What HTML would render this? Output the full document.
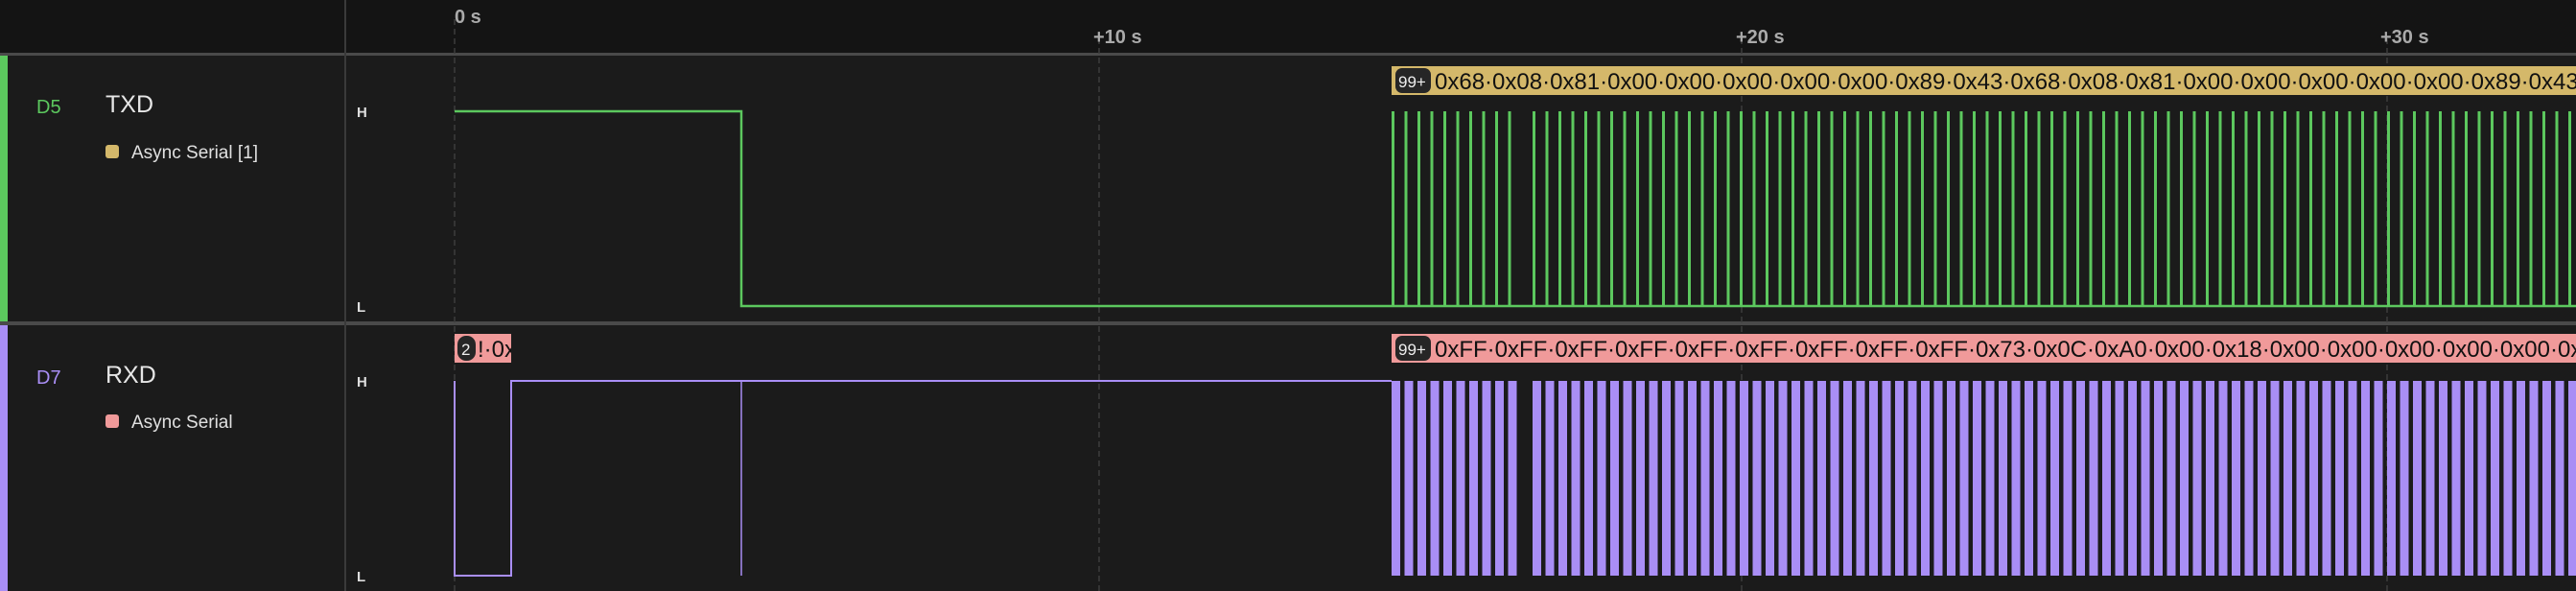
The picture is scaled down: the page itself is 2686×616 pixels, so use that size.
<!DOCTYPE html>
<html><head><meta charset="utf-8"><style>
html,body{margin:0;padding:0;background:#1b1b1b;width:2686px;height:616px;overflow:hidden;font-family:"Liberation Sans",sans-serif}
</style></head><body>
<svg id="s" width="2686" height="616" xmlns="http://www.w3.org/2000/svg" style="position:absolute;left:0;top:0">
<rect x="0" y="0" width="2686" height="616" fill="#1b1b1b"/>
<rect x="0" y="0" width="2686" height="57" fill="#141414"/>
<rect x="0" y="55" width="2686" height="3" fill="#4a4a4a"/>
<rect x="0" y="335" width="2686" height="4" fill="#4a4a4a"/>
<rect x="0" y="58" width="8" height="277" fill="#5cc85e"/>
<rect x="0" y="339" width="8" height="277" fill="#a98ef5"/>
<rect x="359" y="0" width="2" height="616" fill="#3a3a3a"/>
<g stroke="#3c3c3c" stroke-width="1.5" stroke-dasharray="6,4">
<line x1="474" y1="20" x2="474" y2="616"/><line x1="1146" y1="40" x2="1146" y2="616"/>
<line x1="1816" y1="40" x2="1816" y2="616"/><line x1="2489" y1="40" x2="2489" y2="616"/>
</g>
<g font-size="20" fill="#aaaaaa" font-weight="bold">
<text x="474" y="24">0 s</text><text x="1140" y="45">+10 s</text><text x="1810" y="45">+20 s</text><text x="2482" y="45">+30 s</text>
</g>
<g font-size="15" fill="#dddddd" font-weight="bold"><text x="372" y="122">H</text><text x="372" y="325">L</text><text x="372" y="403">H</text><text x="372" y="606">L</text></g>
<text x="38" y="118" font-size="20" fill="#5cc85e">D5</text>
<text x="110" y="117" font-size="25" fill="#e6e6e6">TXD</text>
<rect x="110" y="151" width="14" height="14" rx="3" fill="#d4b86a"/>
<text x="137" y="165" font-size="19" fill="#e0e0e0">Async Serial [1]</text>
<text x="38" y="400" font-size="20" fill="#a98ef5">D7</text>
<text x="110" y="399" font-size="25" fill="#e6e6e6">RXD</text>
<rect x="110" y="432" width="14" height="14" rx="3" fill="#f09a9a"/>
<text x="137" y="446" font-size="19" fill="#e0e0e0">Async Serial</text>
<polyline points="474,116 773,116 773,319 1451,319 2686,319" fill="none" stroke="#5cc85e" stroke-width="2.5"/>
<polyline points="474,397 474,600 533,600 533,397 1451,397" fill="none" stroke="#a98ef5" stroke-width="2"/>
<line x1="773" y1="397" x2="773" y2="600" stroke="#a98ef5" stroke-width="1.5"/>
<g id="gp"></g><g id="pp"></g>
<rect x="1451" y="69" width="1235" height="30" fill="#d4b86a"/>
<rect x="1455" y="71" width="37" height="26" rx="7" fill="#262626"/>
<text x="1458" y="91" font-size="17" fill="#eee">99+</text>
<text x="1496" y="93" font-size="24" fill="#111">0x68·0x08·0x81·0x00·0x00·0x00·0x00·0x00·0x89·0x43·0x68·0x08·0x81·0x00·0x00·0x00·0x00·0x00·0x89·0x43·0x68</text>
<rect x="474" y="348" width="59" height="30" fill="#f09a9a"/>
<rect x="477" y="350" width="19" height="26" rx="9" fill="#262626"/>
<text x="481" y="370" font-size="17" fill="#eee">2</text>
<svg x="474" y="348" width="59" height="30"><text x="24" y="24" font-size="24" fill="#111">!·0x</text></svg>
<rect x="1451" y="348" width="1235" height="30" fill="#f09a9a"/>
<rect x="1455" y="350" width="37" height="26" rx="7" fill="#262626"/>
<text x="1458" y="370" font-size="17" fill="#eee">99+</text>
<text x="1496" y="372" font-size="24" fill="#111">0xFF·0xFF·0xFF·0xFF·0xFF·0xFF·0xFF·0xFF·0xFF·0x73·0x0C·0xA0·0x00·0x18·0x00·0x00·0x00·0x00·0x00·0x00·0x00</text>
</svg>
<script>
var ns="http://www.w3.org/2000/svg",gp=document.getElementById("gp"),pp=document.getElementById("pp");
function add(x){var r=document.createElementNS(ns,"rect");r.setAttribute("x",x);r.setAttribute("y",116);r.setAttribute("width",3);r.setAttribute("height",203);r.setAttribute("fill","#5cc85e");gp.appendChild(r);
var q=document.createElementNS(ns,"rect");q.setAttribute("x",x);q.setAttribute("y",397);q.setAttribute("width",9);q.setAttribute("height",203);q.setAttribute("fill","#a98ef5");pp.appendChild(q);}
for(var i=0;i<10;i++)add(1451+i*13.5);
for(var x=1598;x<2686;x+=13.5)add(x);
</script>
</body></html>
